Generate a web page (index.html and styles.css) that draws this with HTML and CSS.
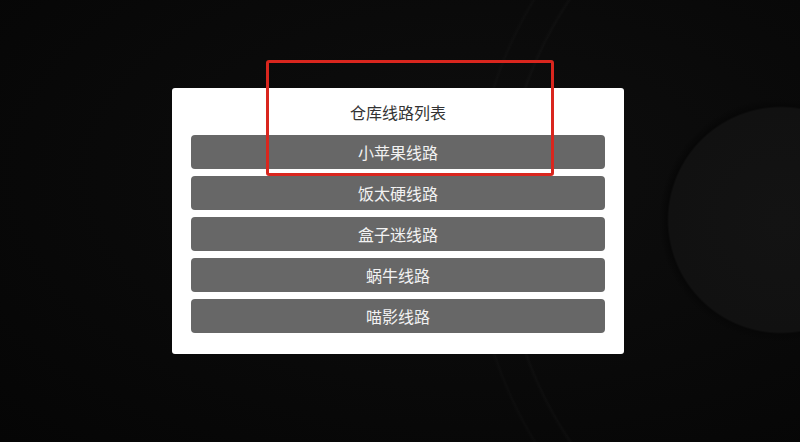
FILE: index.html
```html
<!DOCTYPE html>
<html lang="zh-CN">
<head>
<meta charset="utf-8">
<title>仓库线路列表</title>
<link rel="stylesheet" href="styles.css">
</head>
<body>
<div class="stage">
  <div class="panel">
    <div class="title">仓库线路列表</div>
    <div class="list">
      <div class="route">小苹果线路</div>
      <div class="route">饭太硬线路</div>
      <div class="route">盒子迷线路</div>
      <div class="route">蜗牛线路</div>
      <div class="route">喵影线路</div>
    </div>
  </div>
  <div class="highlight"></div>
</div>
</body>
</html>
```
FILE: styles.css
```css
html, body {
  margin: 0;
  padding: 0;
}
body {
  width: 800px;
  height: 442px;
  overflow: hidden;
  font-family: "Noto Sans CJK SC", "Noto Sans", sans-serif;
  background:
    radial-gradient(circle at 781px 220px, #131313 0, #111 112px, #070707 114px, rgba(0,0,0,0) 122px),
    radial-gradient(circle at 900px 220px, rgba(0,0,0,0) 0, rgba(0,0,0,0) 395px, rgba(255,255,255,0.018) 397px, rgba(0,0,0,0) 400px, rgba(0,0,0,0) 425px, rgba(255,255,255,0.015) 427px, rgba(0,0,0,0) 430px),
    radial-gradient(ellipse at 60% 40%, #0e0e0e 0, #0a0a0a 45%, #050505 100%);
}
.stage {
  position: relative;
  width: 800px;
  height: 442px;
  box-sizing: border-box;
  padding-top: 88px;
  padding-left: 172px;
}
.panel {
  width: 452px;
  box-sizing: border-box;
  background: #fff;
  border-radius: 3px;
  padding: 12px 19px 21px;
}
.title {
  height: 24px;
  line-height: 24px;
  text-align: center;
  font-size: 16px;
  color: #333;
  margin-bottom: 11px;
}
.list {
  display: flex;
  flex-direction: column;
  gap: 7px;
}
.route {
  height: 34px;
  line-height: 34px;
  background: #676767;
  border-radius: 4px;
  text-align: center;
  color: #f2f2f2;
  font-size: 16px;
}
.highlight {
  position: absolute;
  left: 266px;
  top: 60px;
  width: 288px;
  height: 116px;
  box-sizing: border-box;
  border: 3px solid #d9261e;
  border-radius: 3px;
}
```
